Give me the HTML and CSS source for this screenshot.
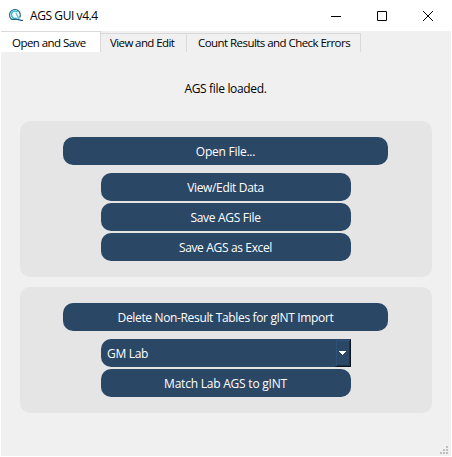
FILE: index.html
```html
<!DOCTYPE html>
<html lang="en">
<head>
<meta charset="utf-8">
<title>AGS GUI v4.4</title>
<link rel="stylesheet" href="styles.css">
</head>
<body>
<div class="window">
  <header class="titlebar">
    <svg class="logo" width="16" height="16" viewBox="0 0 16 16" fill="none">
      <path d="M11.6 9.6A5.4 5.4 0 1 0 4.2 11.6" stroke="#2b6784" stroke-width="1.2"/>
      <path d="M9.6 4.2A3.6 3.6 0 1 0 8.6 10" stroke="#35c3dc" stroke-width="1.5"/>
      <path d="M7.5 5.2C9.8 6 9 9.5 11.5 11.5" stroke="#55bdd4" stroke-width="1.3"/>
      <path d="M3.5 11.4H9C11 11.4 12 12.4 15 12.4" stroke="#275f7a" stroke-width="1.2"/>
    </svg>
    <h1 class="title"><span class="t-title">AGS GUI v4.4</span></h1>
    <div class="controls">
      <svg width="10" height="10" viewBox="0 0 10 10"><path d="M0 5.5H10" stroke="#000"/></svg>
      <svg width="10" height="10" viewBox="0 0 10 10"><path d="M.5 .5H9.5V9.5H.5Z" fill="none" stroke="#000"/></svg>
      <svg width="10" height="10" viewBox="0 0 10 10"><path d="M0 0L10 10M10 0L0 10" stroke="#000"/></svg>
    </div>
  </header>
  <main class="client">
    <nav class="tabs">
      <div class="tab active"><span class="t-open">Open and Save</span></div>
      <div class="tab view"><span class="t-view">View and Edit</span></div>
      <div class="tab count"><span class="t-count">Count Results and Check Errors</span></div>
    </nav>
    <p class="status"><span class="t-status">AGS file loaded.</span></p>
    <section class="panel">
      <button class="btn wide"><span class="t-file">Open File...</span></button>
      <button class="btn"><span class="t-data">View/Edit Data</span></button>
      <button class="btn"><span class="t-save">Save AGS File</span></button>
      <button class="btn"><span class="t-excel">Save AGS as Excel</span></button>
    </section>
    <section class="panel">
      <button class="btn wide"><span class="t-delete">Delete Non-Result Tables for gINT Import</span></button>
      <div class="combo">
        <span class="t-lab">GM Lab</span>
        <div class="drop"><svg width="7" height="4" viewBox="0 0 7 4" shape-rendering="crispEdges"><path d="M0 0H7V1H6V2H5V3H4V4H3V3H2V2H1V1H0Z" fill="#fff"/></svg></div>
      </div>
      <button class="btn"><span class="t-match">Match Lab AGS to gINT</span></button>
    </section>
    <svg class="grip" width="8" height="8" viewBox="0 0 8 8" fill="#bfbfbf" shape-rendering="crispEdges"><path d="M6 0h2v2h-2zM3 3h2v2h-2zM6 3h2v2h-2zM0 6h2v2h-2zM3 6h2v2h-2zM6 6h2v2h-2z"/></svg>
  </main>
</div>
</body>
</html>
```
FILE: styles.css
```css
* { box-sizing: border-box; }
body { margin: 0; background: #fff; font: 12px/16px "Open Sans", "Noto Sans", sans-serif; color: #000; }
span { white-space: nowrap; }
.window { width: 452px; height: 457px; padding: 0 1px 1px; display: flex; flex-direction: column; }
.titlebar { height: 31px; display: flex; align-items: center; padding: 0 18px 0 7px; flex: none; }
.logo { margin-top: 1px; }
.title { margin: 0 0 0 6px; font-size: 12px; font-weight: 400; line-height: 16px; }
.controls { display: flex; gap: 36px; margin-left: auto; }
.controls svg { display: block; }
.client { position: relative; flex: 1; background: #f0f0f0; display: flex; flex-direction: column; align-items: center; }
.tabs { align-self: stretch; display: flex; align-items: flex-end; height: 21px; font-size: 11.5px; }
.tab { height: 19px; border: solid #d9d9d9; border-width: 1px 1px 0 0; padding: 1px 0 0 10px; }
.tab.active { width: 100px; height: 21px; background: #fff; padding: 3px 0 0 11px; }
.tab.view { width: 86px; padding-left: 9px; }
.tab.count { width: 174px; padding-left: 11px; }
.status { margin: 29px 1px 24px 0; height: 16px; }
.panel { width: 412px; border-radius: 10px; background: #e5e5e5; padding: 16px 0; margin-bottom: 10px; display: flex; flex-direction: column; align-items: center; gap: 2px; }
.btn { width: 250px; height: 28px; padding: 2px 1px 0 0; border: 0; border-radius: 10px; background: #2b4766; color: #fff; font: inherit; }
.btn.wide { width: 325px; margin: 0 1px 6px 0; padding-right: 0; }
.combo { width: 250px; height: 28px; border-radius: 10px 0 0 10px; background: #2b4766; color: #fff; display: flex; align-items: center; justify-content: space-between; padding-left: 6px; }
.combo span { padding-top: 2px; }
.drop { width: 16px; height: 28px; border: 1px solid #2b4766; border-right-color: #0d1722; border-bottom-color: #0d1722; box-shadow: inset 1px 1px #30517a, inset -1px -1px #1c3046; display: flex; align-items: center; padding-left: 3px; }
.grip { position: absolute; right: 3px; bottom: 2px; }
.t-title { letter-spacing: -.42px; }
.t-open { letter-spacing: -.55px; }
.t-view { letter-spacing: -.6px; }
.t-count { letter-spacing: -.55px; }
.t-status { letter-spacing: -.33px; }
.t-file { letter-spacing: -.25px; }
.t-data, .t-excel, .t-delete { letter-spacing: -.35px; }
.t-save, .t-lab { letter-spacing: -.3px; }
.t-match { letter-spacing: -.22px; }
```
